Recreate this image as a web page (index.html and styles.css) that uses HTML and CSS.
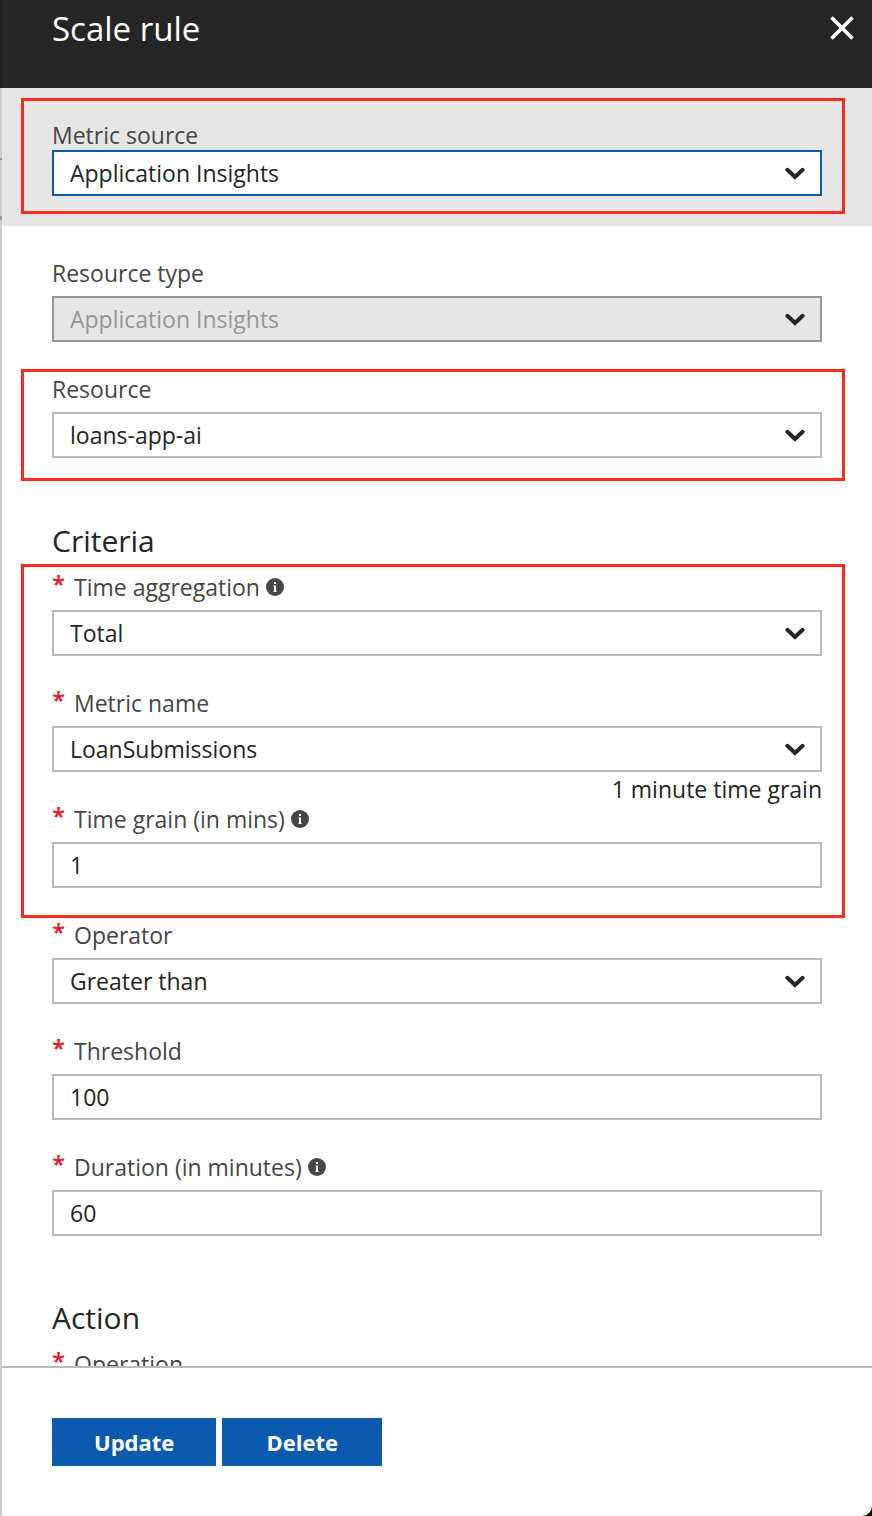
FILE: index.html
```
<!DOCTYPE html>
<html lang="en">
<head>
<meta charset="utf-8">
<meta name="viewport" content="width=device-width, initial-scale=1">
<title>Scale rule</title>
<link rel="stylesheet" href="styles.css">
</head>
<body>
<svg class="defs" aria-hidden="true">
  <symbol id="chevron" viewBox="0 0 20 14"><path d="M2.400 3.800 10 11 17.600 3.800" fill="none" stroke="currentColor" stroke-width="4" stroke-linecap="round" stroke-linejoin="miter"/></symbol>
  <symbol id="info" viewBox="0 0 18 18"><circle cx="9" cy="9" r="9" fill="currentColor"/><path d="M8 4h2v2H8zM7.500 7.500H10V13h.6v1H7.500v-1H8V8.500h-.5z" fill="#fff"/></symbol>
</svg>
<div class="blade">
  <div class="edge"></div>
  <main class="panel">
    <header class="panel-header">
      <h1 class="title">Scale rule</h1>
      <button class="close" type="button" aria-label="Close">
        <svg class="close-icon" viewBox="0 0 24 24"><path d="M1.500 1.500 22.500 22.500M22.500 1.500 1.500 22.500" fill="none" stroke="currentColor" stroke-width="3.600"/></svg>
      </button>
    </header>

    <form class="panel-body" id="rule">
      <div class="source">
        <section class="group marked marked-source">
          <div class="field tight">
            <div class="label-row"><label for="source">Metric source</label></div>
            <div class="picker"><select class="control focused" id="source"><option>Application Insights</option></select><svg class="chevron"><use href="#chevron"/></svg></div>
          </div>
        </section>
      </div>

      <section class="group type-group">
        <div class="field">
          <div class="label-row"><label for="type">Resource type</label></div>
          <div class="picker"><select class="control" id="type" disabled><option>Application Insights</option></select><svg class="chevron"><use href="#chevron"/></svg></div>
        </div>
      </section>

      <section class="group marked marked-resource">
        <div class="field">
          <div class="label-row"><label for="resource">Resource</label></div>
          <div class="picker"><select class="control" id="resource"><option>loans-app-ai</option></select><svg class="chevron"><use href="#chevron"/></svg></div>
        </div>
      </section>

      <h2 class="heading criteria">Criteria</h2>
      <section class="group marked marked-metric">
        <div class="field">
          <div class="label-row"><span class="required">*</span><label for="aggregation">Time aggregation</label><svg class="info"><use href="#info"/></svg></div>
          <div class="picker"><select class="control" id="aggregation"><option>Total</option></select><svg class="chevron"><use href="#chevron"/></svg></div>
        </div>
        <div class="field following">
          <div class="label-row"><span class="required">*</span><label for="metric">Metric name</label></div>
          <div class="picker"><select class="control" id="metric"><option>LoanSubmissions</option></select><svg class="chevron"><use href="#chevron"/></svg></div>
        </div>
        <p class="hint">1 minute time grain</p>
        <div class="field">
          <div class="label-row"><span class="required">*</span><label for="grain">Time grain (in mins)</label><svg class="info"><use href="#info"/></svg></div>
          <input class="control" id="grain" type="text" value="1">
        </div>
      </section>

      <section class="group operator-group">
        <div class="field">
          <div class="label-row"><span class="required">*</span><label for="operator">Operator</label></div>
          <div class="picker"><select class="control" id="operator"><option>Greater than</option></select><svg class="chevron"><use href="#chevron"/></svg></div>
        </div>
        <div class="field following">
          <div class="label-row"><span class="required">*</span><label for="threshold">Threshold</label></div>
          <input class="control" id="threshold" type="text" value="100">
        </div>
        <div class="field following">
          <div class="label-row"><span class="required">*</span><label for="duration">Duration (in minutes)</label><svg class="info"><use href="#info"/></svg></div>
          <input class="control" id="duration" type="text" value="60">
        </div>
      </section>

      <h2 class="heading action">Action</h2>
      <section class="group">
        <div class="field">
          <div class="label-row"><span class="required">*</span><label for="operation">Operation</label></div>
          <div class="picker"><select class="control" id="operation"></select><svg class="chevron"><use href="#chevron"/></svg></div>
        </div>
      </section>
    </form>

    <footer class="panel-footer">
      <button class="button" type="submit" form="rule">Update</button>
      <button class="button" type="button">Delete</button>
    </footer>
  </main>
</div>
</body>
</html>
```
FILE: styles.css
```
* {
  box-sizing: border-box;
}

body {
  margin: 0;
  background: #000;
  color: #252525;
  font: 23px/30px "Open Sans", "Noto Sans", sans-serif;
}

.defs {
  display: none;
}

.blade {
  display: grid;
  grid-template-columns: 2px 1fr;
  height: 100vh;
  overflow: hidden;
  border-bottom-right-radius: 10px;
}

.edge {
  background: linear-gradient(#1f1f1f 88px, #cdcdcd 88px 158px, #999 158px 160px, #cdcdcd 160px 216px, #999 216px 220px, #cdcdcd 220px);
}

.panel {
  display: flex;
  flex-direction: column;
  min-width: 0;
  min-height: 0;
  background: #fff;
}

.panel-header {
  display: flex;
  flex: none;
  justify-content: space-between;
  align-items: flex-start;
  min-height: 88px;
  padding: 6px 18px 0 50px;
  background: #252525;
  color: #fff;
}

.title {
  margin: 0;
  font-size: 33px;
  font-weight: 400;
  line-height: 46px;
}

.close {
  display: flex;
  margin: 0;
  padding: 10px 0;
  border: 0;
  background: none;
  color: inherit;
}

.close-icon {
  width: 24px;
  height: 24px;
}

.panel-body {
  flex: 1;
  min-height: 0;
  overflow-y: auto;
  scrollbar-width: none;
}

.source {
  padding: 10px 0 12px;
  background: #e6e6e6;
}

.group {
  margin: 0 27px 0 19px;
  padding: 0 20px 0 28px;
  border: 0 solid transparent;
  border-width: 0 3px;
}

.marked {
  border: 3px solid #ff291c;
}

.marked-source {
  padding-top: 19px;
  padding-bottom: 15px;
}

.type-group {
  padding-top: 32px;
}

.marked-resource {
  margin-top: 27px;
  padding-top: 2px;
  padding-bottom: 20px;
}

.marked-metric {
  padding-top: 5px;
  padding-bottom: 27px;
}

.operator-group {
  padding-top: 2px;
}

.heading {
  margin: 0 50px;
  font-size: 30px;
  font-weight: 400;
  line-height: 40px;
}

.criteria {
  padding: 40px 0 3px;
}

.action {
  padding: 62px 0 11px;
}

.field {
  display: grid;
  row-gap: 8px;
}

.tight {
  row-gap: 0;
}

.following {
  margin-top: 32px;
}

.label-row {
  display: flex;
  align-items: center;
  color: #464646;
}

.required {
  align-self: flex-start;
  width: 22px;
  color: #e81123;
  font-size: 24px;
  font-weight: 600;
  line-height: 24px;
}

.info {
  width: 18px;
  height: 18px;
  margin-left: 6px;
}

.picker {
  display: grid;
  align-items: center;
}

.picker > * {
  grid-area: 1 / 1;
}

.control {
  width: 100%;
  height: 46px;
  margin: 0;
  padding: 0 16px;
  border: 2px solid #bababa;
  border-radius: 0;
  appearance: none;
  background: #fff;
  color: #252525;
  font: inherit;
}

.focused {
  border-color: #0d59ae;
}

.control:disabled {
  border-color: #969696;
  background: #e6e6e6;
  color: #969696;
  opacity: 1;
}

.chevron {
  justify-self: end;
  width: 20px;
  height: 14px;
  margin-right: 17px;
  color: #252525;
  pointer-events: none;
}

.hint {
  margin: 0;
  padding-top: 2px;
  text-align: right;
}

.panel-footer {
  display: flex;
  flex: none;
  gap: 6px;
  padding: 50px;
  border-top: 2px solid #bababa;
}

.button {
  min-width: 160px;
  height: 48px;
  padding: 0 42px;
  border: 0;
  background: #0d59ae;
  color: #fff;
  font: inherit;
  font-size: 22px;
  font-weight: 700;
}
```
